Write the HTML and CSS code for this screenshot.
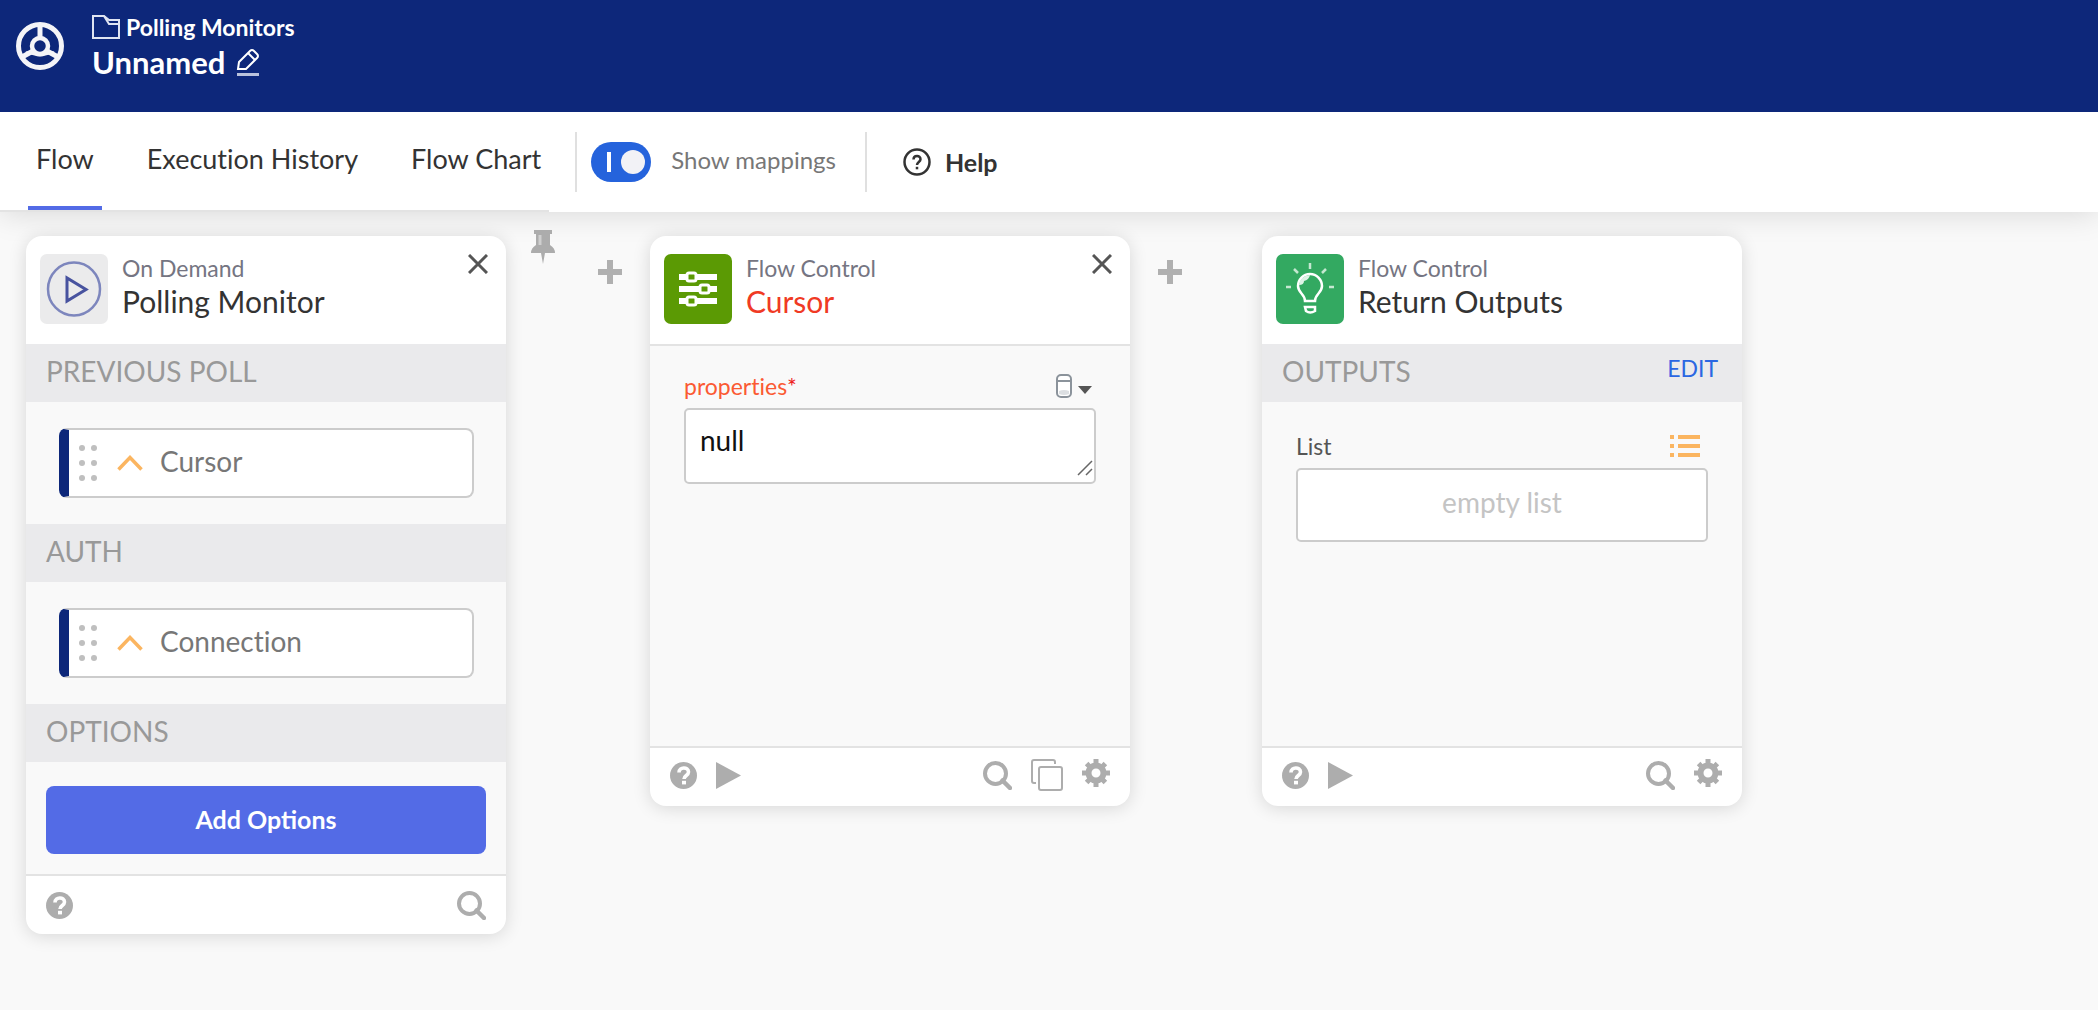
FILE: index.html
```html
<!DOCTYPE html>
<html lang="en">
<head>
    <meta charset="utf-8">
    <title>Unnamed - Polling Monitors</title>
    <meta name="viewport" content="width=device-width, initial-scale=1">
    <link rel="stylesheet" href="styles.css">
</head>
<body>
    <!-- Shared icons -->
    <svg class="sprite" aria-hidden="true">
        <symbol id="icon-close" viewBox="0 0 20 20">
            <path d="M1 1L19 19M19 1L1 19" fill="none" stroke="currentColor" stroke-width="3"/>
        </symbol>
        <symbol id="icon-help" viewBox="0 0 27 27">
            <circle cx="13.500" cy="13.500" r="13.500" fill="currentColor"/>
            <path d="M9 10.500C9 4.500 18.500 4.500 18.500 10C18.500 13.500 14 13.500 14 17" fill="none" stroke="#fff" stroke-width="3.600"/>
            <rect x="12" y="18.800" width="4" height="3.600" fill="#fff"/>
        </symbol>
        <symbol id="icon-play" viewBox="0 0 25 27">
            <path d="M0 0L25 13.500L0 27Z" fill="currentColor"/>
        </symbol>
        <symbol id="icon-search" viewBox="0 0 29 29">
            <circle cx="12.500" cy="12.500" r="10.500" fill="none" stroke="currentColor" stroke-width="4"/>
            <path d="M19.500 19.500L27 27" stroke="currentColor" stroke-width="4.500" stroke-linecap="round"/>
        </symbol>
        <symbol id="icon-copy" viewBox="0 0 32 32">
            <path d="M24 5V3Q24 1 22 1H3Q1 1 1 3V22Q1 24 3 24H5" fill="none" stroke="currentColor" stroke-width="2"/>
            <rect x="8" y="8" width="23" height="23" rx="2" fill="none" stroke="currentColor" stroke-width="2"/>
        </symbol>
        <symbol id="icon-gear" viewBox="0 0 28 28">
            <circle cx="14" cy="14" r="7.500" fill="none" stroke="currentColor" stroke-width="6"/>
            <path d="M14 0V5M14 23V28M0 14H5M23 14H28M4.600 4.600L7.500 7.500M20.500 20.500L23.400 23.400M4.600 23.400L7.500 20.500M20.500 7.500L23.400 4.600" stroke="currentColor" stroke-width="5"/>
        </symbol>
        <symbol id="icon-plus" viewBox="0 0 24 24">
            <path d="M12 0V24M0 12H24" stroke="currentColor" stroke-width="6"/>
        </symbol>
        <symbol id="icon-grip" viewBox="0 0 18 38">
            <g fill="currentColor">
                <circle cx="3" cy="4" r="3"/><circle cx="15" cy="4" r="3"/>
                <circle cx="3" cy="19" r="3"/><circle cx="15" cy="19" r="3"/>
                <circle cx="3" cy="34" r="3"/><circle cx="15" cy="34" r="3"/>
            </g>
        </symbol>
        <symbol id="icon-chevron" viewBox="0 0 26 16">
            <path d="M1.500 14.500L13 2.500L24.500 14.500" fill="none" stroke="currentColor" stroke-width="3.500"/>
        </symbol>
    </svg>

    <header class="header">
        <svg class="logo" viewBox="0 0 48 48" fill="none" stroke="#f4f4f8" stroke-width="5">
            <circle cx="24" cy="24" r="21.500"/>
            <circle cx="24" cy="24" r="8" stroke-width="4.500"/>
            <path d="M24 3V15M17 29L6 35M31 29L42 35"/>
            <path d="M10 31C15 30 19 33 24 33C29 33 33 30 38 31" stroke-width="3"/>
        </svg>
        <div class="header-text">
            <a href="#" class="folder">
                <svg width="28" height="24" viewBox="0 0 28 24" fill="none" stroke="#dfe4f2" stroke-width="2">
                    <path d="M1 23V1H12L17 5H27V23Z"/>
                    <path d="M12 1L17 9H27"/>
                </svg>
                Polling Monitors
            </a>
            <div class="flow-name">
                <h1>Unnamed</h1>
                <button class="icon-button" aria-label="Rename flow">
                    <svg width="24" height="28" viewBox="0 0 24 28" fill="none" stroke="#fff" stroke-width="2">
                        <path d="M2 21L3 14L14 3Q16 1 18 3L21 6Q23 8 21 10L10 21Z"/>
                        <path d="M12 5L19 12"/>
                        <path d="M1 26.500H23" stroke="#b9c2dc" stroke-width="3"/>
                    </svg>
                </button>
            </div>
        </div>
    </header>

    <nav class="toolbar">
        <div class="tabs">
            <a href="#" class="tab active">Flow</a>
            <a href="#" class="tab">Execution History</a>
            <a href="#" class="tab">Flow Chart</a>
        </div>
        <div class="mappings">
            <input type="checkbox" id="show-mappings" class="toggle" checked>
            <label for="show-mappings">Show mappings</label>
        </div>
        <button class="help-button">
            <svg width="28" height="28" viewBox="0 0 28 28" fill="none" stroke="#333">
                <circle cx="14" cy="14" r="12.500" stroke-width="2.500"/>
                <path d="M10.500 11.500C10.500 7 17.500 7 17.500 11.200C17.500 14 14 14 14 17" stroke-width="2.500"/>
                <path d="M14 18.800V21.300" stroke-width="2.500"/>
            </svg>
            Help
        </button>
    </nav>

    <main class="canvas">
        <section class="card">
            <div class="card-header">
                <svg class="card-icon" viewBox="0 0 68 70">
                    <rect width="68" height="70" rx="7" fill="#ebebec"/>
                    <ellipse cx="34" cy="35" rx="26" ry="26.500" fill="none" stroke="#7d86bd" stroke-width="2.500"/>
                    <path d="M27 24V47L46 35.500Z" fill="none" stroke="#48539f" stroke-width="3"/>
                </svg>
                <div class="card-title">
                    <p>On Demand</p>
                    <h2>Polling Monitor</h2>
                </div>
                <button class="icon-button close" aria-label="Close"><svg width="20" height="20"><use href="#icon-close"/></svg></button>
            </div>
            <h3 class="section-title">Previous Poll</h3>
            <div class="section-body">
                <div class="pill">
                    <svg class="grip" width="18" height="38"><use href="#icon-grip"/></svg>
                    <svg class="chevron" width="26" height="16"><use href="#icon-chevron"/></svg>
                    <span>Cursor</span>
                </div>
            </div>
            <h3 class="section-title">Auth</h3>
            <div class="section-body">
                <div class="pill">
                    <svg class="grip" width="18" height="38"><use href="#icon-grip"/></svg>
                    <svg class="chevron" width="26" height="16"><use href="#icon-chevron"/></svg>
                    <span>Connection</span>
                </div>
            </div>
            <h3 class="section-title">Options</h3>
            <div class="options">
                <button class="add-options">Add Options</button>
            </div>
            <div class="card-footer">
                <button class="icon-button" aria-label="Help"><svg width="27" height="27"><use href="#icon-help"/></svg></button>
                <button class="icon-button right" aria-label="Search"><svg width="29" height="29"><use href="#icon-search"/></svg></button>
            </div>
        </section>

        <div class="connector wide">
            <button class="icon-button pin" aria-label="Pin">
                <svg width="24" height="34" viewBox="0 0 24 34">
                    <path d="M3 0H21V4H19V15Q24 18 24 23H14L12 34L10 23H0Q0 18 5 15V4H3Z" fill="#acacac"/>
                    <path d="M9 5V15" stroke="#cfcfcf" stroke-width="3"/>
                </svg>
            </button>
            <button class="icon-button plus" aria-label="Add step"><svg width="24" height="24"><use href="#icon-plus"/></svg></button>
        </div>

        <section class="card">
            <div class="card-header">
                <svg class="card-icon" viewBox="0 0 68 70">
                    <rect width="68" height="70" rx="7" fill="#5b9a04"/>
                    <path d="M15 23H53M15 35H53M15 47H53" stroke="#fff" stroke-width="6"/>
                    <g fill="#5b9a04" stroke="#fff" stroke-width="3">
                        <rect x="23" y="19" width="9" height="8" rx="2"/>
                        <rect x="36" y="31" width="9" height="8" rx="2"/>
                        <rect x="23" y="43" width="9" height="8" rx="2"/>
                    </g>
                </svg>
                <div class="card-title error">
                    <p>Flow Control</p>
                    <h2>Cursor</h2>
                </div>
                <button class="icon-button close" aria-label="Close"><svg width="20" height="20"><use href="#icon-close"/></svg></button>
            </div>
            <div class="card-body">
                <div class="field-head">
                    <label for="properties" class="required">properties<span>*</span></label>
                    <button class="icon-button" aria-label="Select type">
                        <svg width="38" height="24" viewBox="0 0 38 24">
                            <rect x="2" y="1" width="14" height="22" rx="4" fill="#fff" stroke="#8b939b" stroke-width="2"/>
                            <path d="M2 7H16" stroke="#8b939b" stroke-width="2"/>
                            <path d="M4 17Q9 15 14 17V20Q9 22 4 20Z" fill="#dcdfe2"/>
                            <path d="M23 12H37L30 20Z" fill="#555"/>
                        </svg>
                    </button>
                </div>
                <div class="textarea-wrap">
                    <textarea id="properties" rows="1">null</textarea>
                    <svg class="resizer" width="16" height="16" viewBox="0 0 16 16" stroke="#666" stroke-width="1.500">
                        <path d="M1 15L15 1M9 15L15 9"/>
                    </svg>
                </div>
            </div>
            <div class="card-footer step-footer">
                <button class="icon-button" aria-label="Help"><svg width="27" height="27"><use href="#icon-help"/></svg></button>
                <button class="icon-button" aria-label="Run"><svg width="25" height="27"><use href="#icon-play"/></svg></button>
                <button class="icon-button right" aria-label="Search"><svg width="29" height="29"><use href="#icon-search"/></svg></button>
                <button class="icon-button" aria-label="Duplicate"><svg width="32" height="32"><use href="#icon-copy"/></svg></button>
                <button class="icon-button gear" aria-label="Settings"><svg width="28" height="28"><use href="#icon-gear"/></svg></button>
            </div>
        </section>

        <div class="connector">
            <button class="icon-button plus" aria-label="Add step"><svg width="24" height="24"><use href="#icon-plus"/></svg></button>
        </div>

        <section class="card">
            <div class="card-header">
                <svg class="card-icon" viewBox="0 0 68 70">
                    <rect width="68" height="70" rx="7" fill="#33a961"/>
                    <g fill="none" stroke="#fff" stroke-width="2.500">
                        <path d="M29 47C29 40 22 39 22 32A12 12 0 0 1 46 32C46 39 39 40 39 47Z"/>
                        <path d="M29 53H39V57Q34 60 30 57Z"/>
                    </g>
                    <path d="M23 31Q24 22 34 21Q33 26 28 27Q28 31 23 31Z" fill="#dff3e6"/>
                    <path d="M34 9V15M18 15L22 19M50 15L46 19M10 33H15M53 33H58" stroke="#c5e8d1" stroke-width="2.500"/>
                </svg>
                <div class="card-title">
                    <p>Flow Control</p>
                    <h2>Return Outputs</h2>
                </div>
            </div>
            <div class="section-title">
                <h3>Outputs</h3>
                <a href="#" class="edit">Edit</a>
            </div>
            <div class="card-body outputs">
                <div class="field-head">
                    <span>List</span>
                    <svg class="list-icon" width="30" height="24" viewBox="0 0 30 24" stroke="#fbb560" stroke-width="4">
                        <path d="M0 3H4M8 3H30M0 12H4M8 12H30M0 21H4M8 21H30"/>
                    </svg>
                </div>
                <div class="empty-list">empty list</div>
            </div>
            <div class="card-footer step-footer">
                <button class="icon-button" aria-label="Help"><svg width="27" height="27"><use href="#icon-help"/></svg></button>
                <button class="icon-button" aria-label="Run"><svg width="25" height="27"><use href="#icon-play"/></svg></button>
                <button class="icon-button right" aria-label="Search"><svg width="29" height="29"><use href="#icon-search"/></svg></button>
                <button class="icon-button gear" aria-label="Settings"><svg width="28" height="28"><use href="#icon-gear"/></svg></button>
            </div>
        </section>
    </main>
</body>
</html>
```
FILE: styles.css
```css
* {
    box-sizing: border-box;
}

body {
    font-family: Lato, "Open Sans", sans-serif;
    font-variant-ligatures: none;
    background-color: #f9f9f9;
    color: #333;
    margin: 0;
    min-height: 100vh;
}

h1, h2, h3, p {
    margin: 0;
    font-weight: normal;
}

a {
    color: inherit;
    text-decoration: none;
}

button, textarea {
    font-family: inherit;
}

svg {
    display: block;
    flex: none;
}

.sprite {
    position: absolute;
    width: 0;
    height: 0;
}

.icon-button {
    display: block;
    padding: 0;
    border: none;
    background: none;
    color: inherit;
    cursor: pointer;
}

/* Header */
.header {
    display: flex;
    align-items: flex-start;
    gap: 28px;
    position: relative;
    z-index: 1;
    height: 112px;
    padding: 12px 16px;
    background-color: #0d277a;
    color: #fff;
}

.logo {
    width: 48px;
    height: 48px;
    margin-top: 10px;
}

.folder {
    display: flex;
    align-items: center;
    gap: 6px;
    font-size: 23px;
    line-height: 30px;
    font-weight: bold;
}

.flow-name {
    display: flex;
    align-items: center;
    gap: 11px;
}

.flow-name h1 {
    font-size: 31px;
    line-height: 40px;
    font-weight: bold;
}

/* Toolbar */
.toolbar {
    display: flex;
    align-items: center;
    height: 100px;
    padding-left: 28px;
    background-color: #fff;
    box-shadow: 0 0 30px rgba(0, 0, 0, 0.15);
}

.tabs {
    display: flex;
    align-self: flex-start;
    gap: 37px;
    height: 100px;
    margin-left: -28px;
    padding-left: 28px;
    border-bottom: 2px solid #e3e3e3;
}

.tab {
    padding: 0 8px;
    font-size: 27px;
    line-height: 94px;
    border-bottom: 4px solid transparent;
}

.tab.active {
    border-bottom-color: #536be6;
}

.mappings {
    display: flex;
    align-items: center;
    gap: 20px;
    height: 60px;
    margin-left: 26px;
    padding: 0 29px 0 14px;
    border: solid #e0e0e0;
    border-width: 0 2px;
    font-size: 24px;
    line-height: 28px;
    color: #777;
}

.mappings label {
    padding-bottom: 4px;
}

.toggle {
    appearance: none;
    position: relative;
    width: 60px;
    height: 40px;
    margin: 0;
    border-radius: 20px;
    background-color: #2563dc;
    cursor: pointer;
}

.toggle::before {
    content: "";
    position: absolute;
    left: 16px;
    top: 10px;
    width: 4px;
    height: 20px;
    background-color: #fff;
}

.toggle::after {
    content: "";
    position: absolute;
    right: 6px;
    top: 8px;
    width: 24px;
    height: 24px;
    border-radius: 50%;
    background-color: #f2f2f6;
}

.help-button {
    display: flex;
    align-items: center;
    gap: 14px;
    margin-left: 36px;
    padding: 0;
    border: none;
    background: none;
    color: #333;
    font-size: 25px;
    font-weight: bold;
    cursor: pointer;
}

/* Cards */
.canvas {
    display: flex;
    align-items: flex-start;
    padding: 24px 26px;
}

.card {
    width: 480px;
    flex: none;
    background-color: #fff;
    border-radius: 16px;
    box-shadow: 0 2px 18px rgba(0, 0, 0, 0.14);
}

.card-header {
    display: flex;
    align-items: flex-start;
    gap: 14px;
    height: 108px;
    padding: 18px 18px 0 14px;
}

.card-icon {
    width: 68px;
    height: 70px;
}

.card-title p {
    font-size: 23px;
    line-height: 28px;
    color: #757582;
}

.card-title h2 {
    font-size: 30px;
    line-height: 38px;
}

.card-title.error h2 {
    color: #f03a24;
}

.close {
    margin-left: auto;
    color: #555;
}

.section-title {
    display: flex;
    justify-content: space-between;
    height: 58px;
    padding: 0 24px 0 20px;
    background-color: #eaeaec;
    color: #999;
    font-size: 28px;
    line-height: 54px;
    text-transform: uppercase;
}

.section-title h3 {
    font-size: 28px;
}

.edit {
    color: #2b67e2;
    font-size: 23px;
    line-height: 48px;
}

.section-body {
    padding: 26px 32px 26px 33px;
    background-color: #f9f9f9;
}

.pill {
    display: flex;
    align-items: center;
    height: 70px;
    padding-left: 10px;
    background-color: #fff;
    border: 2px solid #ccc;
    border-left: 10px solid #0d277a;
    border-radius: 8px;
    color: #777;
    font-size: 28px;
    line-height: 32px;
}

.pill span {
    padding-bottom: 4px;
}

.grip {
    margin-right: 20px;
    color: #bfbfbf;
}

.chevron {
    margin-right: 17px;
    color: #fbb560;
}

.options {
    padding: 24px 20px 20px;
    background-color: #f9f9f9;
}

.add-options {
    display: block;
    width: 100%;
    height: 68px;
    padding: 0 0 2px;
    border: none;
    border-radius: 8px;
    background-color: #536be6;
    color: #fff;
    font-size: 25px;
    font-weight: bold;
    cursor: pointer;
}

.card-body {
    min-height: 402px;
    padding: 24px 34px;
    background-color: #f9f9f9;
    border-top: 2px solid #e3e3e3;
}

.card-body.outputs {
    min-height: 344px;
    padding-top: 28px;
    border-top: none;
}

.field-head {
    display: flex;
    align-items: center;
    justify-content: space-between;
    height: 32px;
    margin-bottom: 6px;
    padding-right: 3px;
    font-size: 23px;
    line-height: 28px;
}

.outputs .field-head {
    padding-right: 8px;
    color: #555;
}

.required {
    color: #fb5a33;
}

.required span {
    color: #ee2222;
}

.textarea-wrap {
    position: relative;
}

textarea {
    display: block;
    width: 100%;
    height: 76px;
    padding: 14px;
    border: 2px solid #ccc;
    border-radius: 5px;
    background-color: #fff;
    color: #111;
    font-size: 28px;
    line-height: 32px;
    resize: none;
    overflow: hidden;
}

.resizer {
    position: absolute;
    right: 3px;
    bottom: 8px;
    pointer-events: none;
}

.empty-list {
    height: 74px;
    border: 2px solid #ccc;
    border-radius: 5px;
    background-color: #fff;
    color: #c4c4c4;
    font-size: 28px;
    line-height: 64px;
    text-align: center;
}

.card-footer {
    display: flex;
    align-items: center;
    gap: 19px;
    height: 60px;
    padding: 0 20px;
    border-top: 2px solid #e3e3e3;
    color: #adadad;
}

.step-footer {
    padding-bottom: 4px;
}

.right {
    margin-left: auto;
}

.gear {
    margin-bottom: 4px;
}

/* Gap between two cards */
.connector {
    display: flex;
    align-items: flex-start;
    flex: none;
    width: 132px;
    padding: 24px 0 0 28px;
    color: #b0b0b0;
}

.connector.wide {
    width: 144px;
    padding: 0 0 0 25px;
    gap: 43px;
}

.connector.wide .pin {
    margin-top: -6px;
}

.connector.wide .plus {
    margin-top: 24px;
}
```
